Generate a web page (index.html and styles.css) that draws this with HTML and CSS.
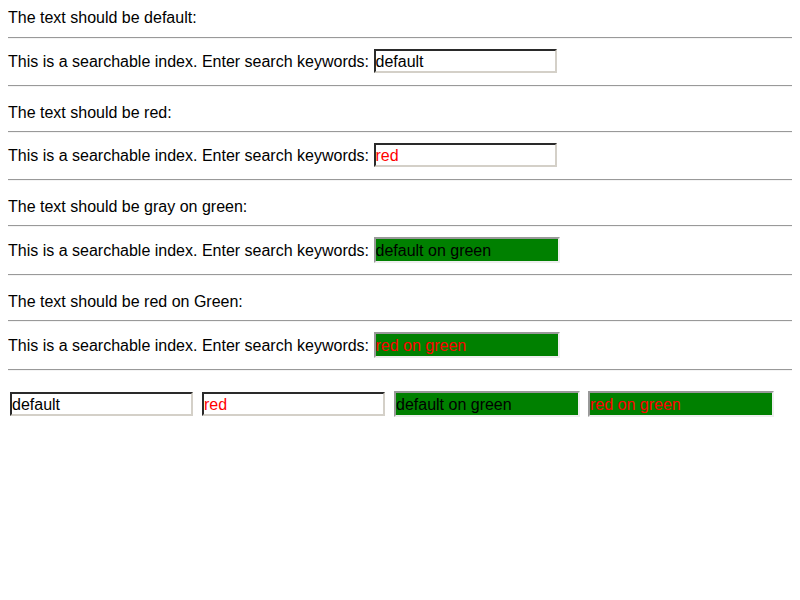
FILE: index.html
```html
<!DOCTYPE html>
<html>
<head>
<meta charset="utf-8">
<link rel="stylesheet" href="styles.css">
</head>
<body>
<div class="label first">The text should be default:</div>
<hr>
<div class="prompt">This is a searchable index. Enter search keywords: <input class="field" value="default"></div>
<hr>
<div class="label">The text should be red:</div>
<hr>
<div class="prompt">This is a searchable index. Enter search keywords: <input class="field red" value="red"></div>
<hr>
<div class="label">The text should be gray on green:</div>
<hr>
<div class="prompt wide">This is a searchable index. Enter search keywords: <input class="field green" value="default on green"></div>
<hr>
<div class="label">The text should be red on Green:</div>
<hr>
<div class="prompt wide">This is a searchable index. Enter search keywords: <input class="field green red" value="red on green"></div>
<hr>
<div class="row">
<input class="field" value="default">
<input class="field red" value="red">
<input class="field green" value="default on green">
<input class="field green red" value="red on green">
</div>
</body>
</html>
```

FILE: styles.css
```css
body {
  margin: 8px;
  font-family: "Liberation Sans", Arial, sans-serif;
  font-size: 16px;
  color: #000;
  background: #fff;
}

hr {
  margin: 0;
  height: 0;
  border: 0;
  border-top: 1px solid #999;
  border-bottom: 1px solid #f4f4f4;
}

.label {
  line-height: 20px;
  margin: 16px 0 8px;
}

.label.first {
  margin: 0 0 9px;
}

.prompt {
  box-sizing: border-box;
  height: 46px;
  padding-top: 10px;
  line-height: 25px;
}

.prompt.wide {
  height: 47px;
  line-height: 27px;
}

.field {
  box-sizing: border-box;
  width: 183px;
  height: 24px;
  margin: 0;
  padding: 2px 0 0 0;
  font-family: "Liberation Sans", Arial, sans-serif;
  font-size: 16px;
  line-height: normal;
  color: #000;
  background: #fff;
  border-style: solid;
  border-width: 2px;
  border-color: #2a2a2a #d4d0c8 #d4d0c8 #2a2a2a;
  vertical-align: top;
  outline: none;
}

.field.red {
  color: #f00;
}

.field.green {
  width: 186px;
  height: 26px;
  background: #008000;
  border-color: #999 #eee #eee #999;
}

.row {
  display: flex;
  align-items: center;
  gap: 9px;
  padding: 20px 0 0 2px;
}

.row .field.green + .field.green {
  margin-left: -1px;
}
```
